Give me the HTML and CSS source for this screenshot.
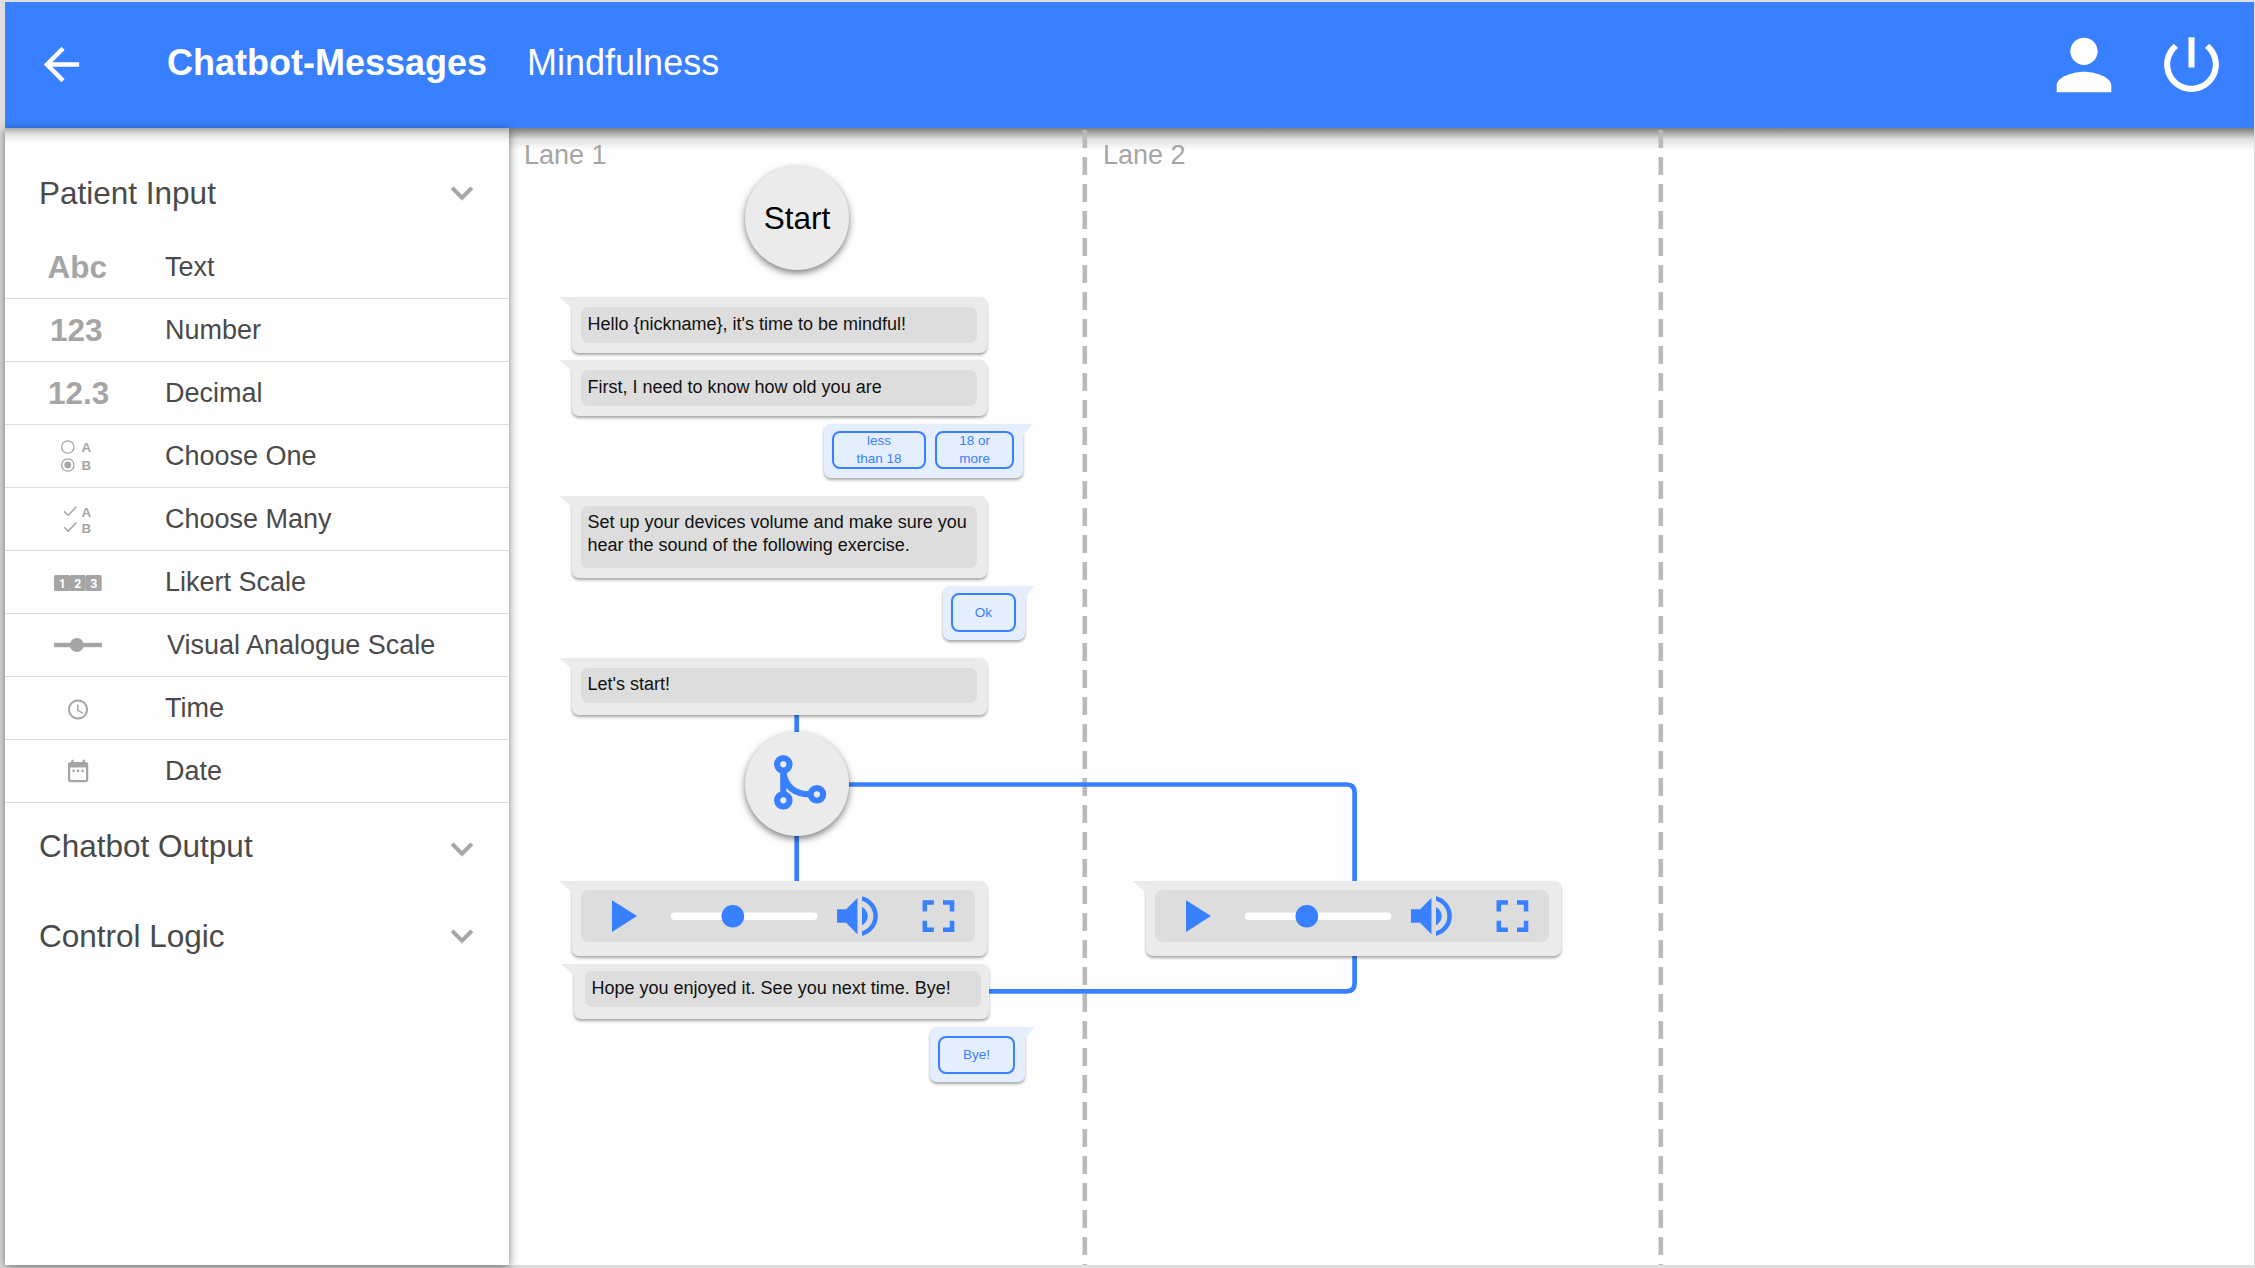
FILE: index.html
```html
<!DOCTYPE html>
<html lang="en">
<head>
<meta charset="utf-8">
<title>Chatbot-Messages – Mindfulness</title>
<link rel="stylesheet" href="styles.css">
</head>
<body>
<svg class="defs" width="0" height="0" aria-hidden="true">
  <symbol id="chevron" viewBox="0 0 24 24"><path d="M16.59 8.59L12 13.17 7.41 8.59 6 10l6 6 6-6z"/></symbol>
  <symbol id="player" viewBox="0 0 394 52">
    <path class="blue" d="M31 10.3v31.6L56 26.1z"/>
    <rect x="89.7" y="22.6" width="146.8" height="7.4" rx="3.7" fill="#fff"/>
    <circle class="blue" cx="151.8" cy="26.2" r="11.3"/>
    <path class="blue" transform="translate(249.2 -1.2) scale(2.27)" d="M3 9v6h4l5 5V4L7 9H3zm13.5 3c0-1.77-1.02-3.29-2.5-4.03v8.05c1.48-.73 2.5-2.25 2.5-4.02zM14 3.23v2.06c2.89.86 5 3.54 5 6.71s-2.11 5.85-5 6.71v2.06c4.01-.91 7-4.49 7-8.77s-2.99-7.86-7-8.77z"/>
    <path class="blue" transform="translate(330.2 -1.1) scale(2.27)" d="M7 14H5v5h5v-2H7v-3zm-2-4h2V7h3V5H5v5zm12 7h-3v2h5v-5h-2v3zM14 5v2h3v3h2V5h-5z"/>
  </symbol>
</svg>

<header class="topbar">
  <svg class="back" viewBox="0 0 24 24"><path d="M20 11H7.83l5.59-5.59L12 4l-8 8 8 8 1.41-1.41L7.83 13H20v-2z"/></svg>
  <h1 class="title">Chatbot-Messages</h1>
  <span class="subtitle">Mindfulness</span>
  <svg class="user" viewBox="0 0 24 24"><path d="M12 12c2.21 0 4-1.79 4-4s-1.79-4-4-4-4 1.79-4 4 1.79 4 4 4zm0 2c-2.67 0-8 1.34-8 4v2h16v-2c0-2.66-5.33-4-8-4z"/></svg>
  <svg class="power" viewBox="0 0 24 24"><path d="M13 3h-2v10h2V3zm4.83 2.17l-1.42 1.42C17.99 7.86 19 9.81 19 12c0 3.87-3.13 7-7 7s-7-3.13-7-7c0-2.19 1.01-4.14 2.58-5.42L6.17 5.17C4.23 6.82 3 9.26 3 12c0 4.97 4.03 9 9 9s9-4.03 9-9c0-2.74-1.23-5.18-3.17-6.83z"/></svg>
</header>

<div class="workspace">
  <aside class="sidebar">
    <div class="group group-first"><span>Patient Input</span><svg class="chev"><use href="#chevron"/></svg></div>
    <ul class="items">
      <li><span class="glyph">Abc</span><span>Text</span></li>
      <li><span class="glyph glyph-int">123</span><span>Number</span></li>
      <li><span class="glyph glyph-dec">12.3</span><span>Decimal</span></li>
      <li>
        <svg class="icon" viewBox="0 0 160 62">
          <circle class="ring" cx="62.8" cy="22" r="6.2"/><circle class="ring" cx="62.8" cy="40" r="6.2"/><circle cx="62.8" cy="40" r="3.4"/>
          <text x="76.4" y="27">A</text><text x="76.4" y="45">B</text>
        </svg><span>Choose One</span></li>
      <li>
        <svg class="icon" viewBox="0 0 160 62">
          <path class="tick" d="M59.2 23.4l4 3.9 8.2-8.6M59.2 39.2l4 3.9 8.2-8.6"/>
          <text x="76.4" y="29">A</text><text x="76.4" y="44.8">B</text>
        </svg><span>Choose Many</span></li>
      <li>
        <svg class="icon" viewBox="0 0 160 62">
          <rect x="49" y="24" width="16" height="16" rx="1.6"/><rect x="64.8" y="24" width="16" height="16" rx="1.6"/><rect x="80.7" y="24" width="16" height="16" rx="1.6"/>
          <g class="digits"><text x="57.2" y="36.5">1</text><text x="72.9" y="36.5">2</text><text x="88.8" y="36.5">3</text></g>
        </svg><span>Likert Scale</span></li>
      <li>
        <svg class="icon" viewBox="0 0 160 62"><rect x="49" y="28.8" width="48" height="4.4"/><circle cx="71.8" cy="31" r="7"/></svg><span class="wide-label">Visual Analogue Scale</span></li>
      <li>
        <svg class="icon" viewBox="0 0 160 62"><path transform="translate(61 20.5)" d="M11.99 2C6.47 2 2 6.48 2 12s4.47 10 9.99 10C17.52 22 22 17.52 22 12S17.52 2 11.99 2zM12 20c-4.42 0-8-3.58-8-8s3.58-8 8-8 8 3.58 8 8-3.58 8-8 8zm.5-13H11v6l5.25 3.15.75-1.23-4.5-2.67z"/></svg><span>Time</span></li>
      <li>
        <svg class="icon" viewBox="0 0 160 62"><path transform="translate(59.6 17.4) scale(1.125)" d="M9 11H7v2h2v-2zm4 0h-2v2h2v-2zm4 0h-2v2h2v-2zm2-7h-1V2h-2v2H8V2H6v2H5c-1.11 0-1.99.9-1.99 2L3 20c0 1.1.89 2 2 2h14c1.1 0 2-.9 2-2V6c0-1.1-.9-2-2-2zm0 16H5V9h14v11z"/></svg><span>Date</span></li>
    </ul>
    <div class="group group-output"><span>Chatbot Output</span><svg class="chev"><use href="#chevron"/></svg></div>
    <div class="group group-logic"><span>Control Logic</span><svg class="chev"><use href="#chevron"/></svg></div>
  </aside>

  <main class="canvas">
    <svg class="edges" viewBox="509 128 1745 1137">
      <path class="lane-line" d="M1084.8 130V1265M1660.8 130V1265"/>
      <path class="edge" d="M796.7 714V740M796.7 830V882M845 784.5H1346.6q8 0 8 8V882M1354.6 950V983.3q0 8-8 8H985"/>
    </svg>
    <span class="lane lane-1">Lane 1</span>
    <span class="lane lane-2">Lane 2</span>

    <div class="node start">Start</div>
    <div class="bubble b-hello"><p>Hello {nickname}, it's time to be mindful!</p></div>
    <div class="bubble b-age"><p>First, I need to know how old you are</p></div>
    <div class="reply r-age"><span class="opt opt-less">less<br>than 18</span><span class="opt opt-more">18 or<br>more</span></div>
    <div class="bubble b-volume"><p>Set up your devices volume and make sure you hear the sound of the following exercise.</p></div>
    <div class="reply r-ok"><span class="opt">Ok</span></div>
    <div class="bubble b-start"><p>Let's start!</p></div>
    <div class="node branch">
      <svg viewBox="745 732 104 104">
        <path d="M783.3 771V794M783.3 771Q786 794.3 810 794.3"/>
        <circle cx="783.3" cy="764.3" r="6.2"/><circle cx="783.3" cy="800.3" r="6.2"/><circle cx="816.9" cy="794.3" r="6.2"/>
      </svg>
    </div>
    <div class="bubble media m-1"><svg class="player"><use href="#player"/></svg></div>
    <div class="bubble media m-2"><svg class="player"><use href="#player"/></svg></div>
    <div class="bubble b-bye"><p>Hope you enjoyed it. See you next time. Bye!</p></div>
    <div class="reply r-bye"><span class="opt">Bye!</span></div>
  </main>
</div>
</body>
</html>
```

FILE: styles.css
```css
* { box-sizing: border-box; }

body {
  margin: 0;
  width: 2255px;
  height: 1268px;
  padding: 2px 1px 3px 5px;
  display: flex;
  flex-direction: column;
  overflow: hidden;
  background: #dedede;
  font-family: "Liberation Sans", Arial, sans-serif;
  color: #4a4a4a;
}

svg { display: block; flex: none; }
.defs { position: absolute; }
.blue { fill: #3880ff; }

/* Top bar */
.topbar {
  flex: none;
  height: 126px;
  display: flex;
  align-items: center;
  padding: 0 26px 2px 30px;
  background: #3880ff;
  color: #fff;
  fill: #fff;
}
.back { width: 53px; height: 53px; margin-top: 1px; }
.title { margin: -2px 0 0 79px; font-size: 36px; font-weight: bold; line-height: 42px; }
.subtitle { margin: -2px 0 0 40px; font-size: 36px; line-height: 42px; }
.user { width: 82px; height: 82px; margin-left: auto; margin-top: 1px; }
.power { width: 73px; height: 73px; margin-left: 30px; margin-top: 1px; }

.workspace { flex: 1; display: flex; min-height: 0; }

/* Sidebar */
.sidebar {
  position: relative;
  z-index: 1;
  flex: none;
  width: 504px;
  background: linear-gradient(rgba(0,0,0,.32), rgba(0,0,0,.12) 6px, transparent 15px) #fefefe;
  box-shadow: 0 2px 9px rgba(0,0,0,.5);
}
.group {
  display: flex;
  align-items: center;
  justify-content: space-between;
  height: 86px;
  padding: 0 25px 0 34px;
  font-size: 31.5px;
}
.group-first { height: 108px; padding-top: 22px; }
.group-output .chev { margin-top: 6px; }
.group-logic { height: 94px; }
.chev { width: 44px; height: 44px; fill: #a5a5a5; stroke: #a5a5a5; stroke-width: .3; }

.items { margin: 0; padding: 0; list-style: none; font-size: 27px; }
.items li {
  display: flex;
  align-items: center;
  height: 63px;
  border-bottom: 1px solid #dcdcdc;
}
.glyph { width: 160px; padding-left: 42.5px; font-size: 31.5px; font-weight: bold; color: #a5a5a5; }
.glyph-int { padding-left: 45px; }
.glyph-dec { padding-left: 43px; }
.icon { width: 160px; height: 62px; fill: #a5a5a5; font-size: 13.3px; font-weight: bold; }
.ring { fill: none; stroke: #a5a5a5; stroke-width: 1.3; }
.tick { fill: none; stroke: #a5a5a5; stroke-width: 1.5; }
.digits { fill: #fff; font: bold 12.4px Roboto, sans-serif; text-anchor: middle; }
.wide-label { padding-left: 2px; }

/* Canvas */
.canvas {
  position: relative;
  flex: 1;
  background: linear-gradient(rgba(0,0,0,.5), rgba(0,0,0,.38) 4px, rgba(0,0,0,.12) 11px, transparent 22px) #fefefe;
}
.edges { width: 1745px; height: 1137px; }
.lane-line { stroke: #bcb9b7; stroke-width: 4.6; stroke-dasharray: 18 9; }
.edge { fill: none; stroke: #3880ff; stroke-width: 4.7; }
.lane { position: absolute; top: 12px; font-size: 27px; line-height: 31px; color: #a5a5a5; }
.lane-1 { left: 15px; }
.lane-2 { left: 594px; }

.node {
  position: absolute;
  left: 236px;
  width: 104px;
  height: 104px;
  border-radius: 50%;
  background: #ebebeb;
  box-shadow: 0 3px 7px rgba(0,0,0,.5);
}
.start { top: 38px; line-height: 105px; text-align: center; font-size: 31.5px; color: #000; }
.branch { top: 604px; }
.branch svg { fill: none; stroke: #3880ff; stroke-width: 6.2; }

.bubble, .reply { position: absolute; border-radius: 7px; box-shadow: 0 2px 3px rgba(0,0,0,.35); }
.bubble { left: 63px; width: 415px; padding: 10px 10px 10px 9px; background: #ebebeb; border-top-left-radius: 0; }
.reply { display: flex; gap: 9px; background: #e5eeff; border-top-right-radius: 0; }
.bubble::before, .reply::after { content: ""; position: absolute; top: 0; width: 14px; height: 12px; background: inherit; }
.bubble::before { left: -13px; clip-path: polygon(0 0, 100% 0, 100% 100%); }
.reply::after { right: -9px; width: 10px; height: 14px; clip-path: polygon(0 0, 100% 0, 0 100%); }

.bubble p {
  margin: 0;
  height: 100%;
  padding: 6px 0 0 6.5px;
  border-radius: 7px;
  background: #ddd;
  font-size: 18px;
  line-height: 23px;
  color: #111;
}
.b-hello { top: 169px; height: 56px; }
.b-age { top: 232px; height: 56px; }
.b-volume { top: 368px; height: 82px; }
.b-volume p, .b-start p { padding-top: 5px; }
.b-start { top: 530px; height: 57px; padding-bottom: 12px; }
.b-bye { left: 65px; top: 836px; height: 55px; padding: 7px 8px 12px 11px; }

.media { top: 753px; height: 75px; padding: 9px 12px 14px 9px; }
.m-2 { left: 636.5px; }
.player { width: 394px; height: 52px; border-radius: 7px; background: #ddd; }

.opt {
  flex: 1;
  display: flex;
  align-items: center;
  justify-content: center;
  border: 2px solid #3880ff;
  border-radius: 8px;
  text-align: center;
  font-size: 13.5px;
  line-height: 18px;
  color: #3880ff;
}
.opt-less { flex: 95; }
.opt-more { flex: 79; }
.r-age { left: 315px; top: 296px; width: 199px; height: 54px; padding: 7px 9px 9px 8px; }
.r-ok { left: 434px; top: 458px; width: 82px; height: 54px; padding: 7px 9px 8px 8px; }
.r-bye { left: 421px; top: 899px; width: 95px; height: 55px; padding: 9px 10px 8px 8px; }
```
